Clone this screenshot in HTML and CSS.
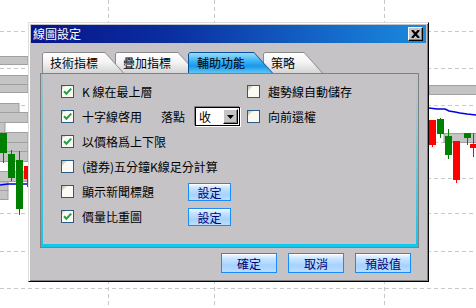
FILE: index.html
```html
<!DOCTYPE html>
<html lang="zh-Hant">

<head>
  <meta charset="UTF-8">
  <meta name="viewport" content="width=device-width, initial-scale=1.0">
  <title>線圖設定</title>

  <link rel="stylesheet" href="styles.css">
</head>

<body>

  <svg class="defs" width="0" height="0">
    <symbol id="box-on" viewBox="0 0 13 13">
      <rect x="0.5" y="0.5" width="12" height="12" fill="#fbfaf4" stroke="#2b5b82" />
      <path d="M1 1h3v1h-2v2h-1z" fill="#c9d6c6" />
      <path d="M3 6.3 L5.4 8.8 L10.2 3.6" fill="none" stroke="#26a044" stroke-width="2" />
    </symbol>
    <symbol id="box-off" viewBox="0 0 13 13">
      <rect x="0.5" y="0.5" width="12" height="12" fill="#fbfaf4" stroke="#2b5b82" />
      <path d="M1 1h5l-5 5z" fill="#d3e2cc" />
      <path d="M1 1h3l-3 3z" fill="#b9d0b4" />
    </symbol>
  </svg>

  <div class="desk">

    <!-- chart behind the dialog -->
    <svg class="chart" width="476" height="308" viewBox="0 0 476 308">
      <rect width="476" height="308" fill="#fff" />
      <g stroke="#c8c8c8" stroke-dasharray="4 3">
        <line x1="0" y1="31.5" x2="476" y2="31.5" />
        <line x1="0" y1="68.5" x2="476" y2="68.5" />
        <line x1="0" y1="105.5" x2="476" y2="105.5" />
        <line x1="0" y1="142.5" x2="476" y2="142.5" />
        <line x1="0" y1="178.5" x2="476" y2="178.5" />
        <line x1="0" y1="213.5" x2="476" y2="213.5" />
        <line x1="0" y1="251.5" x2="476" y2="251.5" />
        <line x1="0" y1="288.5" x2="476" y2="288.5" />
        <line x1="108.5" y1="0" x2="108.5" y2="308" />
        <line x1="214.5" y1="0" x2="214.5" y2="308" />
        <line x1="384.5" y1="0" x2="384.5" y2="308" />
      </g>
      <g fill="#c4c4c4" stroke="#a0a0a0">
        <rect x="-1" y="56.5" width="29" height="8" />
        <rect x="-1" y="75.5" width="29" height="9" />
        <rect x="-1" y="84.5" width="29" height="8" />
        <rect x="-1" y="103.5" width="20" height="9" />
        <rect x="-1" y="112.5" width="29" height="10" />
        <rect x="-1" y="122.5" width="6" height="10" />
        <rect x="-1" y="132.5" width="29" height="10" />
        <rect x="-1" y="142.5" width="29" height="9" />
        <rect x="-1" y="151.5" width="29" height="10" />
        <rect x="-1" y="171.5" width="29" height="10" />
        <rect x="-1" y="181.5" width="9" height="9" />
        <rect x="-1" y="190.5" width="9" height="9" />
        <rect x="429" y="85.5" width="48" height="9" />
        <rect x="444" y="133.5" width="33" height="9" />
      </g>
      <polyline points="0,185 8,184 28,184" fill="none" stroke="#0000e0" stroke-width="1.5" />
      <polyline points="429,108 437,109 445,109 449,111 455,112 460,113 467,114 476,115" fill="none"
        stroke="#0000e0" stroke-width="1.5" />
      <g stroke-width="1">
        <line x1="3.5" y1="133" x2="3.5" y2="163" stroke="#008000" />
        <rect x="0" y="133" width="7" height="20" fill="#008000" />
        <line x1="11.5" y1="150" x2="11.5" y2="181" stroke="#008000" />
        <rect x="8" y="154" width="7" height="24" fill="#008000" />
        <line x1="19.5" y1="151" x2="19.5" y2="215" stroke="#008000" />
        <rect x="16" y="160" width="7" height="49" fill="#008000" />
        <line x1="27.5" y1="166" x2="27.5" y2="187" stroke="#ff0000" />
        <rect x="24" y="166" width="5" height="13" fill="#ff0000" />

        <line x1="432.5" y1="120" x2="432.5" y2="147" stroke="#ff0000" />
        <rect x="429" y="120" width="7" height="25" fill="#ff0000" />
        <line x1="440.5" y1="118" x2="440.5" y2="138" stroke="#008000" />
        <rect x="437" y="119" width="7" height="15" fill="#008000" />
        <line x1="448.5" y1="129" x2="448.5" y2="159" stroke="#008000" />
        <rect x="445" y="136" width="7" height="19" fill="#008000" />
        <line x1="456.5" y1="141" x2="456.5" y2="183" stroke="#ff0000" />
        <rect x="453" y="141" width="7" height="39" fill="#ff0000" />
        <line x1="467.5" y1="133" x2="467.5" y2="145" stroke="#008000" />
        <rect x="464" y="133" width="7" height="5" fill="#008000" />
        <line x1="473.5" y1="133" x2="473.5" y2="157" stroke="#ff0000" />
        <rect x="470" y="144" width="7" height="4" fill="#ff0000" />
      </g>
    </svg>

    <div class="dialog">
      <div class="titlebar">
        <span class="title">線圖設定</span>
        <span class="close">
          <svg width="9" height="8" viewBox="0 0 9 8">
            <path d="M1 0 L8 8 M8 0 L1 8" stroke="#000" stroke-width="2.2" />
          </svg>
        </span>
      </div>

      <div class="tabs">
        <div class="tab tab-1"><div class="tab-face">技術指標</div></div>
        <div class="tab tab-2"><div class="tab-face">疊加指標</div></div>
        <div class="tab tab-3 active"><div class="tab-face">輔助功能</div></div>
        <div class="tab tab-4"><div class="tab-face">策略</div></div>
      </div>

      <div class="panel">
        <div class="row">
          <div class="check"><svg class="box"><use href="#box-on" /></svg>K 線在最上層</div>
          <div class="check"><svg class="box"><use href="#box-off" /></svg>趨勢線自動儲存</div>
        </div>
        <div class="row">
          <div class="cell">
            <div class="check w-short"><svg class="box"><use href="#box-on" /></svg>十字線啓用</div>
            <span class="field-label">落點</span>
            <div class="select">
              <span class="select-val">收</span>
              <span class="select-btn">
                <svg width="7" height="4" viewBox="0 0 7 4">
                  <path d="M0 0h7l-3.5 4z" fill="#000" />
                </svg>
              </span>
            </div>
          </div>
          <div class="check"><svg class="box"><use href="#box-off" /></svg>向前還權</div>
        </div>
        <div class="row">
          <div class="check"><svg class="box"><use href="#box-on" /></svg>以價格爲上下限</div>
        </div>
        <div class="row">
          <div class="check wide"><svg class="box"><use href="#box-off" /></svg>(證券)五分鐘K線足分計算</div>
        </div>
        <div class="row">
          <div class="cell">
            <div class="check w-long"><svg class="box"><use href="#box-off" /></svg>顯示新聞標題</div>
            <button class="btn btn-sm">設定</button>
          </div>
        </div>
        <div class="row">
          <div class="cell">
            <div class="check w-long"><svg class="box"><use href="#box-on" /></svg>價量比重圖</div>
            <button class="btn btn-sm">設定</button>
          </div>
        </div>
      </div>

      <div class="actions">
        <button class="btn">確定</button>
        <button class="btn">取消</button>
        <button class="btn">預設值</button>
      </div>
    </div>

  </div>

</body>

</html>
```

FILE: styles.css
```css
body {
  margin: 0;
  overflow: hidden;
  font-family: "Noto Sans CJK TC", "Liberation Sans", sans-serif;
  font-size: 12px;
  color: #000;
}

.defs {
  position: absolute;
  width: 0;
  height: 0;
}

.desk {
  position: relative;
  width: 476px;
  height: 308px;
}

.chart {
  display: block;
}

/* dialog window */
.dialog {
  position: absolute;
  left: 28px;
  top: 22px;
  width: 401px;
  height: 260px;
  box-sizing: border-box;
  padding: 2px;
  background: #c6c3c6;
  border: 1px solid;
  border-color: #dcdcdc #000 #000 #dcdcdc;
  box-shadow: inset 1px 1px 0 #fff, inset -1px -1px 0 #808080;
}

.titlebar {
  display: flex;
  align-items: center;
  justify-content: space-between;
  height: 18px;
  padding-left: 2px;
  background: linear-gradient(90deg, #08148a 0%, #0a2e9e 35%, #1468c8 75%, #1c8ade 100%);
}

.title {
  color: #fff;
  font-size: 12px;
  line-height: 18px;
}

.close {
  display: flex;
  align-items: center;
  justify-content: center;
  box-sizing: border-box;
  width: 15px;
  height: 14px;
  margin-right: 3px;
  background: #c6c3c6;
  border: 1px solid;
  border-color: #fff #000 #000 #fff;
  box-shadow: inset -1px -1px 0 #808080;
}

/* tabs */
.tabs {
  display: flex;
  height: 21px;
  margin: 9px 0 0 11px;
}

.tab {
  position: relative;
  height: 21px;
  box-sizing: border-box;
  padding: 1px 1px 0 1px;
  background: #8a8a8a;
  clip-path: polygon(0 2px, 2px 0, calc(100% - 19px) 0, 100% 100%, 0 100%);
}

.tab-face {
  height: 100%;
  box-sizing: border-box;
  padding-left: 7px;
  line-height: 20px;
  background: linear-gradient(#ffffff, #f4f4f4 45%, #d4d4d4);
  clip-path: polygon(0 1px, 1px 0, calc(100% - 18px) 0, 100% 100%, 0 100%);
}

.tab-1 {
  width: 82px;
  z-index: 4;
}

.tab-2 {
  width: 82px;
  margin-left: -9px;
  z-index: 3;
}

.tab-3 {
  width: 85px;
  margin-left: -9px;
  z-index: 5;
}

.tab-4 {
  width: 60px;
  margin-left: -10px;
  z-index: 1;
}

.tab.active {
  background: #0a4f9c;
}

.tab.active .tab-face {
  padding-left: 8px;
  background: linear-gradient(#9adcfb, #3cb4f4 40%, #1898ea 65%, #62c4f4);
}

/* panel */
.panel {
  width: 379px;
  height: 175px;
  box-sizing: border-box;
  margin-left: 9px;
  padding: 5px 0 0 20px;
  border: 1px solid #808080;
  background:
    linear-gradient(#a4c0c8, #14c6ea) left top / 2px 100% no-repeat,
    linear-gradient(#bec3c6 10%, #7cc8d8 45%, #14c6ea) right top / 2px 100% no-repeat,
    linear-gradient(#14c6ea, #14c6ea) left bottom / 100% 3px no-repeat,
    #c6c3c6;
}

.row {
  display: grid;
  grid-template-columns: 186px auto;
  align-items: center;
  height: 25px;
}

.cell {
  display: flex;
  align-items: center;
}

.check {
  display: flex;
  align-items: center;
  gap: 8px;
  white-space: nowrap;
}

.check.wide {
  grid-column: span 2;
}

.box {
  width: 13px;
  height: 13px;
  flex: none;
}

.w-short {
  width: 100px;
}

.w-long {
  width: 127px;
}

.field-label {
  width: 34px;
}

.select {
  display: flex;
  align-items: center;
  justify-content: space-between;
  box-sizing: border-box;
  width: 45px;
  height: 19px;
  padding: 1px;
  background: #fff;
  border: 1px solid #000;
  box-shadow: -1px -1px 0 #808080, 1px 1px 0 #fff;
}

.select-val {
  padding-left: 2px;
  line-height: 15px;
}

.select-btn {
  display: flex;
  align-items: center;
  justify-content: center;
  box-sizing: border-box;
  width: 15px;
  height: 15px;
  background: #c6c3c6;
  border: 1px solid;
  border-color: #fff #000 #000 #fff;
  box-shadow: inset -1px -1px 0 #808080;
}

/* buttons */
.btn {
  box-sizing: border-box;
  width: 56px;
  height: 20px;
  padding: 0;
  font-family: inherit;
  font-size: 12px;
  color: #00007a;
  border: 1px solid #1a8cf8;
  box-shadow: inset 0 1px 0 #fff;
  background: linear-gradient(#f4faff, #c8e4ff 25%, #a6d2fc 65%, #bcdeff);
}

.btn-sm {
  width: 43px;
  height: 18px;
}

.actions {
  display: flex;
  justify-content: flex-end;
  gap: 11px;
  margin-top: 5px;
  padding-right: 15px;
}
```
